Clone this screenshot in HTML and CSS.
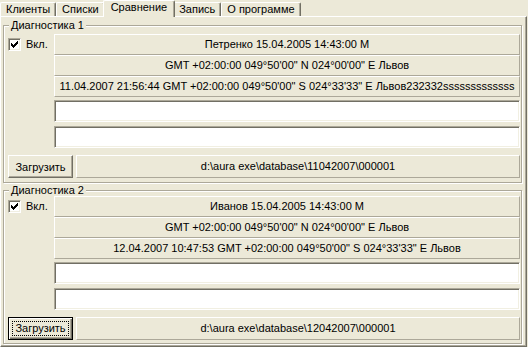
FILE: index.html
```html
<!DOCTYPE html>
<html lang="ru">
<head>
    <meta charset="UTF-8">
    <title>Сравнение</title>
    <link rel="stylesheet" href="styles.css">
</head>
<body>
    <div class="tabs">
        <div class="tab">Клиенты</div>
        <div class="tab">Списки</div>
        <div class="tab active">Сравнение</div>
        <div class="tab">Запись</div>
        <div class="tab">О программе</div>
    </div>

    <div class="page">
        <fieldset class="group">
            <legend>Диагностика 1</legend>
            <div class="group-top">
                <label class="check">
                    <span class="box"><svg width="7" height="7" viewBox="0 0 7 7"><path d="M0 2h1v3H0zM1 3h1v3H1zM2 4h1v3H2zM3 3h1v3H3zM4 2h1v3H4zM5 1h1v3H5zM6 0h1v3H6z"/></svg></span>
                    Вкл.
                </label>
                <div class="fields">
                    <div class="cell">Петренко 15.04.2005 14:43:00 М</div>
                    <div class="cell">GMT +02:00:00 049°50'00" N 024°00'00" E Львов</div>
                    <div class="cell">11.04.2007 21:56:44 GMT +02:00:00 049°50'00" S 024°33'33" E Львов232332sssssssssssss</div>
                    <div class="edit"></div>
                    <div class="edit"></div>
                </div>
            </div>
            <div class="load-row">
                <button class="btn">Загрузить</button>
                <div class="cell path">d:\aura exe\database\11042007\000001</div>
            </div>
        </fieldset>

        <fieldset class="group second">
            <legend>Диагностика 2</legend>
            <div class="group-top">
                <label class="check">
                    <span class="box"><svg width="7" height="7" viewBox="0 0 7 7"><path d="M0 2h1v3H0zM1 3h1v3H1zM2 4h1v3H2zM3 3h1v3H3zM4 2h1v3H4zM5 1h1v3H5zM6 0h1v3H6z"/></svg></span>
                    Вкл.
                </label>
                <div class="fields">
                    <div class="cell">Иванов 15.04.2005 14:43:00 М</div>
                    <div class="cell">GMT +02:00:00 049°50'00" N 024°00'00" E Львов</div>
                    <div class="cell">12.04.2007 10:47:53 GMT +02:00:00 049°50'00" S 024°33'33" E Львов</div>
                    <div class="edit"></div>
                    <div class="edit"></div>
                </div>
            </div>
            <div class="load-row">
                <button class="btn default"><span class="focus">Загрузить</span></button>
                <div class="cell path">d:\aura exe\database\12042007\000001</div>
            </div>
        </fieldset>
    </div>
</body>
</html>
```

FILE: styles.css
```css
* {
    box-sizing: border-box;
}
body {
    margin: 0;
    width: 528px;
    height: 347px;
    overflow: hidden;
    background-color: #ece9d8;
    font: 11px "Liberation Sans", Arial, sans-serif;
    color: #000;
}

/* вкладки */
.tabs {
    display: flex;
    align-items: flex-end;
    height: 16px;
}
.tab {
    height: 14px;
    padding: 0 5px;
    line-height: 12px;
    white-space: nowrap;
    border-top: 1px solid #fff;
    border-left: 1px solid #fff;
    border-right: 1px solid #716f64;
    border-radius: 2px 2px 0 0;
    box-shadow: inset -1px 0 #aca899;
}
.tab.active {
    position: relative;
    z-index: 1;
    height: 17px;
    margin: 0 -2px -1px;
    padding: 0 7px;
    background-color: #ece9d8;
}

/* страница */
.page {
    width: 527px;
    height: 331px;
    padding: 0 4px 0 2px;
    border: 1px solid;
    border-color: #fff #716f64 #716f64 #fff;
    box-shadow: inset -1px -1px #aca899;
}
.group {
    min-width: 0;
    margin: 2px 0 0;
    padding: 0;
    border: 1px solid #aca899;
    box-shadow: inset 1px 1px #fff, 1px 1px #fff;
}
.group legend {
    margin-left: 5px;
    padding: 0 2px;
    line-height: 13px;
    background-color: #ece9d8;
}
.group-top {
    display: flex;
    padding: 2px 1px 0 0;
}
.second {
    margin-top: 1px;
}
.second .group-top {
    margin-top: -1px;
    padding-top: 0;
}
.check {
    display: flex;
    align-items: center;
    gap: 5px;
    width: 50px;
    height: 17px;
    padding: 3px 0 0 4px;
}
.box {
    display: flex;
    align-items: center;
    justify-content: center;
    width: 13px;
    height: 13px;
    background-color: #fff;
    border: 1px solid;
    border-color: #aca899 #fff #fff #aca899;
    box-shadow: inset 1px 1px #716f64, inset -1px -1px #f1efe2;
}
.fields {
    flex: 1;
    display: flex;
    flex-direction: column;
}
.cell {
    height: 21px;
    line-height: 19px;
    text-align: center;
    white-space: nowrap;
    overflow: hidden;
    border: 1px solid;
    border-color: #fff #aca899 #aca899 #fff;
}
.edit {
    height: 22px;
    margin-top: 3px;
    background-color: #fff;
    border: 1px solid;
    border-color: #aca899 #fff #fff #aca899;
    box-shadow: inset 1px 1px #716f64, inset -1px -1px #f1efe2;
}
.edit + .edit {
    margin-top: 4px;
}

/* нижняя строка */
.load-row {
    display: flex;
    gap: 3px;
    margin-top: 7px;
    padding: 0 1px 4px 4px;
}
.second .load-row {
    padding-bottom: 3px;
}
.btn {
    width: 65px;
    height: 23px;
    padding: 0;
    font: inherit;
    color: #000;
    background-color: #ece9d8;
    border: 1px solid;
    border-color: #fff #716f64 #716f64 #fff;
    box-shadow: inset -1px -1px #aca899;
}
.btn.default {
    border-color: #000;
    box-shadow: inset 1px 1px #fff, inset -1px -1px #716f64, inset -2px -2px #aca899;
}
.focus {
    display: inline-block;
    padding: 0 2px;
    line-height: 13px;
    border: 1px dotted #000;
}
.path {
    flex: 1;
    height: 23px;
    line-height: 21px;
}
```
